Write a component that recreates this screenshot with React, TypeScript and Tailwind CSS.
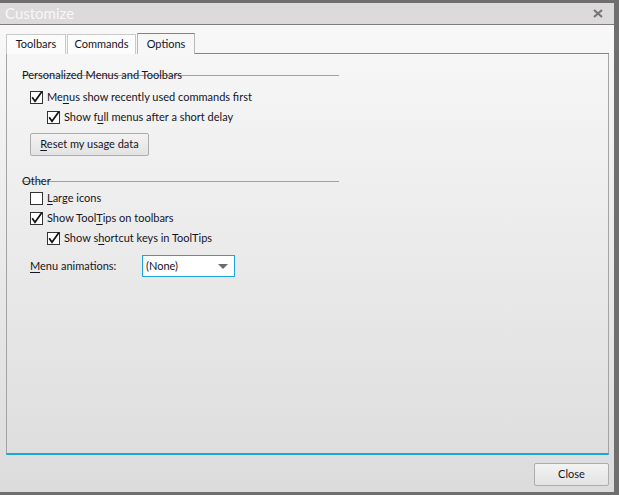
import React from "react";

const CheckMark = () => (
  <svg width="13" height="13" viewBox="0 0 13 13" className="overflow-visible">
    <path d="M2.2 6.2 L5 10.2 L11.8 0.8" fill="none" stroke="#111" strokeWidth="1.7" />
  </svg>
);

function Check({ checked, children, indent = false }: { checked: boolean; children: React.ReactNode; indent?: boolean }) {
  return (
    <div className={`flex items-center h-[20px] ${indent ? "pl-[25px]" : "pl-[8px]"}`}>
      <div className="w-[13px] h-[13px] border border-[#333] bg-white flex items-center justify-center shrink-0">
        {checked && <CheckMark />}
      </div>
      <span className="ml-[4px]">{children}</span>
    </div>
  );
}

function GroupTitle({ children }: { children: React.ReactNode }) {
  return (
    <div className="w-[317px] h-[14px] leading-[14px] bg-[linear-gradient(#a0a0a0,#a0a0a0)] bg-no-repeat bg-[length:100%_1px] bg-[position:0_7px]">
      {children}
    </div>
  );
}

export default function App() {
  return (
    <div className="w-[619px] h-[495px] flex flex-col border-t-[3px] border-r-[5px] border-b-[3px] border-[#6f6f6f] font-['Lato','Liberation_Sans',Arial,sans-serif] text-[11px] text-[#151525] overflow-hidden">
      <div className="h-[22px] bg-[#dddadb] border-b border-[#7c7c7c] flex items-center justify-between pl-[5px] pr-[11px] shrink-0">
        <span className="text-[15px] text-[#f7f7f7] leading-none">Customize</span>
        <svg width="10" height="9" viewBox="0 0 10 9">
          <path d="M1 1 L9 8 M9 1 L1 8" stroke="#777" strokeWidth="2.2" />
        </svg>
      </div>

      <div className="flex-1 flex flex-col pl-[6px] pr-[5px] bg-[linear-gradient(#f8f8f8,#dcdcdc)]">
        <div className="flex items-end h-[29px] pt-[8px]">
          <div className="h-[20px] w-[60px] border border-b-0 border-[#c9c9c9] bg-[#fcfcfc] flex items-center justify-center">Toolbars</div>
          <div className="h-[20px] w-[69px] ml-[1px] border border-b-0 border-[#c9c9c9] bg-[#fcfcfc] flex items-center justify-center">Commands</div>
          <div className="h-[21px] w-[58px] ml-[1px] border-x border-[#b8b8b8] border-t border-t-[#1ba7dc] bg-[#f7f7f7] flex items-center justify-center">Options</div>
          <div className="flex-1 h-[1px] bg-[#1ba7dc]" />
        </div>

        <div className="h-[401px] border-l border-r border-[#a3a3a3] border-b-2 border-b-[#1ba7dc] pl-[15px] flex flex-col">
          <div className="mt-[14px]">
            <GroupTitle>Personalized Menus and Toolbars</GroupTitle>
          </div>
          <div className="mt-[5px]">
            <Check checked>
              Me<u className="underline-offset-2">n</u>us show recently used commands first
            </Check>
            <Check checked indent>
              Show f<u className="underline-offset-2">u</u>ll menus after a short delay
            </Check>
          </div>
          <button className="mt-[6px] ml-[8px] w-[119px] h-[23px] border border-[#adadad] rounded-[2px] bg-[linear-gradient(#f3f3f3,#e3e3e3)] text-[#151525]">
            <u className="underline-offset-2">R</u>eset my usage data
          </button>

          <div className="mt-[18px]">
            <GroupTitle>Other</GroupTitle>
          </div>
          <div>
            <Check checked={false}>
              <u className="underline-offset-2">L</u>arge icons
            </Check>
            <Check checked>
              Show Tool<u className="underline-offset-2">T</u>ips on toolbars
            </Check>
            <Check checked indent>
              Show s<u className="underline-offset-2">h</u>ortcut keys in ToolTips
            </Check>
          </div>
          <div className="flex items-center mt-[7px] pl-[8px]">
            <span className="w-[112px]">
              <u className="underline-offset-2">M</u>enu animations:
            </span>
            <div className="w-[93px] h-[22px] border border-[#1ba7dc] bg-white flex items-center justify-between pl-[3px] pr-[6px]">
              <span>(None)</span>
              <svg width="10" height="5" viewBox="0 0 10 5">
                <path d="M0 0 L10 0 L5 5 Z" fill="#6b6b6b" />
              </svg>
            </div>
          </div>
        </div>

        <div className="flex justify-end mt-[8px]">
          <button className="w-[75px] h-[23px] border border-[#adadad] rounded-[2px] bg-[linear-gradient(#f3f3f3,#e3e3e3)] text-[#151525]">
            Close
          </button>
        </div>
      </div>
    </div>
  );
}
